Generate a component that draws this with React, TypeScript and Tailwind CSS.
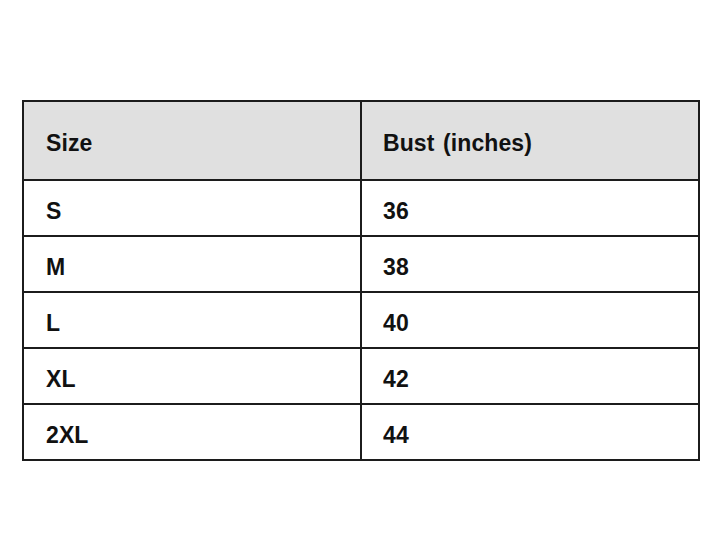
const rows = [
    {size: "S", bust: "36"},
    {size: "M", bust: "38"},
    {size: "L", bust: "40"},
    {size: "XL", bust: "42"},
    {size: "2XL", bust: "44"},
];

export default function App() {
    return (
        <div className="w-[720px] h-[559px] bg-white pt-[100px] pl-[22px]" style={{fontFamily: '"Liberation Sans", Arial, sans-serif'}}>
            {/* Size chart */}
            <div className="w-[678px] border-2 border-[#1c1c1c] text-[23px] font-bold text-[#111] tracking-[0.1px] [word-spacing:2px]">
                <div className="flex h-[79px] bg-[#e0e0e0] border-b-2 border-[#1c1c1c]">
                    <div className="w-[338px] border-r-2 border-[#1c1c1c] flex items-center pt-[6px] pl-[22px]">Size</div>
                    <div className="flex-1 flex items-center pt-[6px] pl-[21px]">Bust (inches)</div>
                </div>
                {rows.map((row, i) => (
                    <div
                        key={row.size}
                        className={i < rows.length - 1 ? "flex h-[56px] border-b-2 border-[#1c1c1c]" : "flex h-[54px]"}
                    >
                        <div className="w-[338px] border-r-2 border-[#1c1c1c] flex items-center pt-[6px] pl-[22px]">{row.size}</div>
                        <div className="flex-1 flex items-center pt-[6px] pl-[21px]">{row.bust}</div>
                    </div>
                ))}
            </div>
        </div>
    );
}
